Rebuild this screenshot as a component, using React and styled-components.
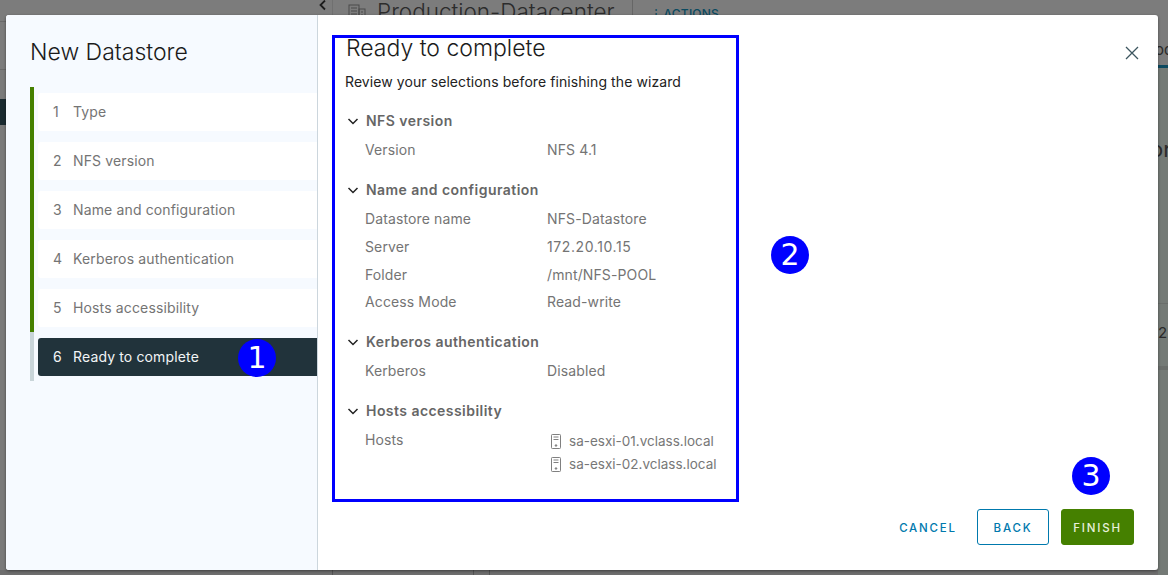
import React from "react";
import styled, { createGlobalStyle } from "styled-components";

const Global = createGlobalStyle`
  html, body { margin: 0; padding: 0; }
  body { width: 1168px; height: 575px; overflow: hidden; font-family: "Inter", "Liberation Sans", sans-serif; }
  * { box-sizing: border-box; }
`;

const Page = styled.div`
  position: relative;
  display: flex;
  width: 1168px;
  height: 575px;
  overflow: hidden;
  background: #7a7a7a;
`;

const BackMain = styled.div`
  flex: 1;
  min-width: 0;
  display: flex;
  flex-direction: column;
`;

const BackHeader = styled.div`
  position: relative;
  display: flex;
  align-items: flex-start;
  height: 70px;
  flex: none;
  background: #7c7c7c;
  border-bottom: 1px solid #6a6a6a;
  color: #2c2c2c;

  &::before {
    content: "";
    position: absolute;
    left: 0;
    top: 21px;
    width: 6px;
    height: 1px;
    background: #6a6a6a;
  }
`;

const BackNavToggle = styled.span`
  display: flex;
  justify-content: center;
  width: 333px;
  padding-left: 313px;
  height: 69px;
  border-right: 1px solid #707070;
`;

const BackIcon = styled.span`
  display: flex;
  margin: 4px 0 0 15px;
`;

const BackTitle = styled.span`
  font-size: 22.5px;
  line-height: 24px;
  margin-left: 11px;
  font-weight: 300;
  width: 256px;
  flex: none;
  height: 30px;
  border-right: 1px solid #666;
`;

const BackActions = styled.span`
  margin: 6px 0 0 17px;
  font-size: 12px;
  letter-spacing: 0.2px;
  word-spacing: -2px;
  color: #0a4a60;
  font-weight: 500;
`;

const BackBand = styled.div`
  width: 20px;
  height: 26px;
  margin-top: 29px;
  background: #1a2a30;
`;

const BackFill = styled.div`
  flex: 1;
`;

const BackFoot = styled.div`
  height: 5px;
  flex: none;
  display: flex;
  background: #6e6e6e;
`;

const BackFootCell = styled.span`
  width: ${(p) => p.$w}px;
  flex: none;
  border-right: 1px solid #555;
`;

const Rail = styled.div`
  width: 10px;
  flex: none;
  overflow: hidden;
  white-space: nowrap;
  background: #747a76;
  color: #2a2a2a;
  font-size: 15px;
  line-height: 20px;
`;

const RailTop = styled.div`
  height: 68px;
  padding-top: 40px;
  text-indent: -3px;
  background: #7c7c7c;
  border-bottom: 3px solid #0d4a60;
`;

const RailItem = styled.div`
  height: ${(p) => p.$h}px;
  padding-top: ${(p) => p.$pad}px;
  font-size: ${(p) => p.$size}px;
  text-indent: ${(p) => p.$indent}px;
  border-bottom: ${(p) => p.$bw}px solid #6a6e6b;
`;

const Modal = styled.div`
  position: absolute;
  left: 6px;
  top: 15px;
  width: 1152px;
  height: 555px;
  display: flex;
  background: #fff;
  border-radius: 3px;
  box-shadow: 0 1px 3px rgba(0, 0, 0, 0.45);
`;

const Side = styled.aside`
  width: 312px;
  flex: none;
  background: #f6faff;
  border-right: 1px solid #ccd6dd;
  border-radius: 3px 0 0 3px;
  padding: 21px 0 0 24px;
`;

const SideTitle = styled.h2`
  margin: 0 0 19px;
  font-size: 23px;
  line-height: 32px;
  font-weight: 300;
  color: #1b1b1b;
`;

const Steps = styled.ol`
  list-style: none;
  margin: 0;
  padding: 0;
`;

const Step = styled.li`
  padding: 6px 0 5px 4px;
  margin: 0;
  border-left: 4px solid ${(p) => (p.$current ? "#c9d5d9" : "#458000")};
`;

const StepInner = styled.div`
  position: relative;
  display: flex;
  align-items: center;
  height: 38px;
  padding: 0 0 2px 15px;
  border-radius: 3px 0 0 3px;
  font-size: 14px;
  letter-spacing: 0.14px;
  color: ${(p) => (p.$current ? "#f2f5f6" : "#747474")};
  background: ${(p) => (p.$current ? "#21333b" : "#fff")};
`;

const StepNum = styled.span`
  width: 20px;
`;

const Badge = styled.span`
  position: absolute;
  width: 38px;
  height: 38px;
  border-radius: 50%;
  background: #0000ff;
  color: #fff;
  font: 30px/38px "DejaVu Sans", sans-serif;
  text-align: center;
`;

const StepBadge = styled(Badge)`
  left: 200px;
  top: 1px;
`;

const Main = styled.main`
  position: relative;
  flex: 1;
  padding: 20px 0 0 14px;
`;

const Frame = styled.section`
  width: 407px;
  height: 467px;
  border: 3px solid #0000ff;
  padding: 0 0 0 10px;
`;

const MainTitle = styled.h2`
  margin: -2px 0 0 1px;
  font-size: 23px;
  line-height: 24px;
  font-weight: 300;
  color: #1b1b1b;
`;

const Lead = styled.p`
  margin: 12px 0 0;
  font-size: 14px;
  line-height: 20px;
  letter-spacing: 0.08px;
  color: #222;
`;

const Group = styled.section`
  margin-top: ${(p) => p.$mt}px;
`;

const GroupHead = styled.h3`
  display: flex;
  align-items: center;
  gap: 6px;
  margin: 0 0 9px 1px;
  font-size: 14px;
  line-height: 20px;
  letter-spacing: 0.45px;
  font-weight: 600;
  color: #666;
`;

const Row = styled.div`
  display: flex;
  min-height: 28px;
  font-size: 14px;
  line-height: 20px;
  letter-spacing: 0.12px;
  color: #747474;

  &:nth-child(4) {
    min-height: 27px;
  }
`;

const Key = styled.div`
  width: 182px;
  flex: none;
  margin-left: 20px;
`;

const Value = styled.div`
  letter-spacing: ${(p) => (p.$numeric ? "0.6px" : "inherit")};
`;

const Host = styled.div`
  display: flex;
  align-items: center;
  gap: 8px;
  height: 24px;
  margin-top: -1px;
  font-size: 13.5px;
  letter-spacing: 0;
  color: #777;
`;

const Close = styled.button`
  position: absolute;
  right: 19px;
  top: 31px;
  width: 14px;
  height: 14px;
  padding: 0;
  background: none;
  border: 0;
  display: flex;
`;

const Footer = styled.footer`
  position: absolute;
  right: 24px;
  bottom: 25px;
  display: flex;
  gap: 12px;
  align-items: center;
`;

const Btn = styled.button`
  height: 36px;
  padding: 4px 0 0;
  width: ${(p) => p.$w}px;
  border-radius: 3px;
  font: 500 11.5px/1 "Inter", sans-serif;
  letter-spacing: 1.8px;
  color: ${(p) => (p.$primary ? "#e8f0dc" : "#0079ad")};
  background: ${(p) => (p.$primary ? "#458000" : "#fff")};
  border: 1px solid ${(p) => (p.$primary ? "#458000" : p.$flat ? "transparent" : "#0079ad")};
`;

const ActionBadge = styled(Badge)`
  right: 48px;
  top: 442px;
`;

const MainBadge = styled(Badge)`
  left: 453px;
  top: 221px;
`;

const Chevron = () => (
  <svg width="14" height="14" viewBox="0 0 14 14" fill="none" stroke="#222" strokeWidth="1.5">
    <path d="M2.500 5l4.500 4.500L11.500 5" />
  </svg>
);

const HostIcon = () => (
  <svg width="14" height="18" viewBox="0 0 14 18" fill="none" stroke="#808080" strokeWidth="1">
    <rect x="4.500" y="2.500" width="9" height="14" rx="0.8" />
    <path d="M6.500 5h5M6.500 7.500h5" />
    <circle cx="9" cy="13.500" r=".8" fill="#707070" />
  </svg>
);

const groups = [
  { title: "NFS version", mt: 19, rows: [["Version", "NFS 4.1"]] },
  {
    title: "Name and configuration",
    mt: 12,
    rows: [
      ["Datastore name", "NFS-Datastore"],
      ["Server", "172.20.10.15", true],
      ["Folder", "/mnt/NFS-POOL"],
      ["Access Mode", "Read-write"],
    ],
  },
  { title: "Kerberos authentication", mt: 12, rows: [["Kerberos", "Disabled"]] },
];

const steps = ["Type", "NFS version", "Name and configuration", "Kerberos authentication", "Hosts accessibility", "Ready to complete"];

export default function App() {
  return (
    <Page>
      <Global />
      <BackMain>
        <BackHeader>
          <BackNavToggle>
            <svg width="10" height="12" viewBox="0 0 10 12" fill="none" stroke="#1c1c1c" strokeWidth="1.8">
              <path d="M7 0.500L2.500 5 7 9.500" />
            </svg>
          </BackNavToggle>
          <BackIcon>
            <svg width="18" height="16" viewBox="0 0 18 16" fill="none" stroke="#4a4a4a" strokeWidth="1">
              <rect x="1" y="1" width="10" height="14" />
              <rect x="11" y="5" width="6" height="10" />
              <path d="M3 4h6M3 7h6M3 10h6M13 8h2M13 11h2" />
            </svg>
          </BackIcon>
          <BackTitle>Production-Datacenter</BackTitle>
          <BackActions>⋮ ACTIONS</BackActions>
        </BackHeader>
        <BackBand />
        <BackFill />
        <BackFoot>
          <BackFootCell $w={333} />
          <BackFootCell $w={141} />
          <BackFootCell $w={16} />
        </BackFoot>
      </BackMain>
      <Rail>
        <RailTop>od</RailTop>
        <RailItem $h={236} $pad={71} $size={22} $indent={-8} $bw={1}>or</RailItem>
        <RailItem $h={66} $pad={19} $size={15} $indent={0} $bw={4}>2</RailItem>
      </Rail>
      <Modal>
        <Side>
          <SideTitle>New Datastore</SideTitle>
          <Steps>
            {steps.map((s, i) => (
              <Step key={s} $current={i === 5}>
                <StepInner $current={i === 5}>
                  <StepNum>{i + 1}</StepNum>
                  {s}
                  {i === 5 && <StepBadge>1</StepBadge>}
                </StepInner>
              </Step>
            ))}
          </Steps>
        </Side>
        <Main>
          <Frame>
            <MainTitle>Ready to complete</MainTitle>
            <Lead>Review your selections before finishing the wizard</Lead>
            {groups.map((g) => (
              <Group key={g.title} $mt={g.mt}>
                <GroupHead>
                  <Chevron />
                  {g.title}
                </GroupHead>
                {g.rows.map(([k, v, numeric]) => (
                  <Row key={k}>
                    <Key>{k}</Key>
                    <Value $numeric={numeric}>{v}</Value>
                  </Row>
                ))}
              </Group>
            ))}
            <Group $mt={12}>
              <GroupHead>
                <Chevron />
                Hosts accessibility
              </GroupHead>
              <Row>
                <Key>Hosts</Key>
                <div>
                  <Host><HostIcon />sa-esxi-01.vclass.local</Host>
                  <Host><HostIcon />sa-esxi-02.vclass.local</Host>
                </div>
              </Row>
            </Group>
          </Frame>
          <MainBadge>2</MainBadge>
          <ActionBadge>3</ActionBadge>
          <Close aria-label="Close">
            <svg width="14" height="14" viewBox="0 0 14 14" stroke="#3d565f" strokeWidth="1.3">
              <path d="M1 1l12 12M13 1L1 13" />
            </svg>
          </Close>
          <Footer>
            <Btn $flat $w={74}>CANCEL</Btn>
            <Btn $w={72}>BACK</Btn>
            <Btn $primary $w={73}>FINISH</Btn>
          </Footer>
        </Main>
      </Modal>
    </Page>
  );
}
